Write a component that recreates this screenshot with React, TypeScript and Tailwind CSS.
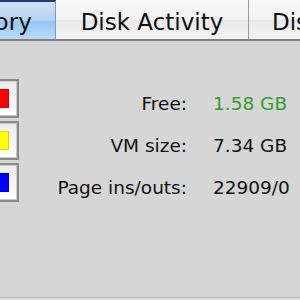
const rows = [
  { swatch: "bg-[#ff0000]", label: "Free:", value: "1.58 GB", valueClass: "text-[#2e9e2a]" },
  { swatch: "bg-[#ffff00]", label: "VM size:", value: "7.34 GB", valueClass: "text-[#111111]" },
  { swatch: "bg-[#0000ff]", label: "Page ins/outs:", value: "22909/0", valueClass: "text-[#111111]" },
];

function ColorWell({ swatch }: { swatch: string }) {
  return (
    <div className="ml-[-22px] h-[39px] w-[41px] shrink-0 border-2 border-[#8a8a8a] bg-[#c9c9c9] p-px">
      <div className="h-full w-full bg-gradient-to-b from-[#ececec] to-white p-[7px]">
        <div className={`h-full w-full border border-black/15 ${swatch}`} />
      </div>
    </div>
  );
}

export default function App() {
  return (
    <div
      className="flex h-[300px] w-[300px] flex-col overflow-hidden bg-[#d6d6d6] text-[#111111]"
      style={{ fontFamily: '"DejaVu Sans", "Liberation Sans", sans-serif' }}
    >
      {/* tab strip */}
      <div className="flex h-[41px] shrink-0 border-b-2 border-[#7f7f7f] text-[23px] whitespace-nowrap">
        <div className="relative ml-[-85px] flex w-[141px] shrink-0 flex-col border-t-2 border-r border-t-[#28357f] border-r-[#6f9fd4]">
          <div className="flex-1 bg-gradient-to-b from-[#cbe0f6] to-[#b3d2f2]" />
          <div className="flex-1 bg-gradient-to-b from-[#97c5f1] to-[#b8dcfa]" />
          <span className="absolute top-[6px] w-full text-center leading-[28px]">Memory</span>
        </div>
        <div className="relative flex w-[193px] shrink-0 flex-col border-r border-[#9c9c9c]">
          <div className="flex-1 bg-gradient-to-b from-[#f9f9f9] to-[#f1f1f1]" />
          <div className="flex-1 bg-gradient-to-b from-[#e9e9e9] to-[#f4f4f4]" />
          <span className="absolute top-[8px] w-full text-center leading-[28px]">Disk Activity</span>
        </div>
        <div className="relative flex w-[140px] shrink-0 flex-col">
          <div className="flex-1 bg-gradient-to-b from-[#f9f9f9] to-[#f1f1f1]" />
          <div className="flex-1 bg-gradient-to-b from-[#e9e9e9] to-[#f4f4f4]" />
          <span className="absolute top-[8px] left-[23px] leading-[28px]">Disk Usage</span>
        </div>
      </div>

      {/* memory panel */}
      <div className="flex flex-1 flex-col gap-[3px] pt-[38px] text-[18.5px]">
        {rows.map((r) => (
          <div key={r.label} className="flex items-center">
            <ColorWell swatch={r.swatch} />
            <div className="flex pt-[11px]">
              <span className="w-[168px] text-right">{r.label}</span>
              <span className={`ml-[26px] whitespace-nowrap ${r.valueClass}`}>{r.value}</span>
            </div>
          </div>
        ))}
      </div>

      <div className="h-[3px] shrink-0 border-t border-[#bdbdbd] bg-[#dedede]" />
    </div>
  );
}
